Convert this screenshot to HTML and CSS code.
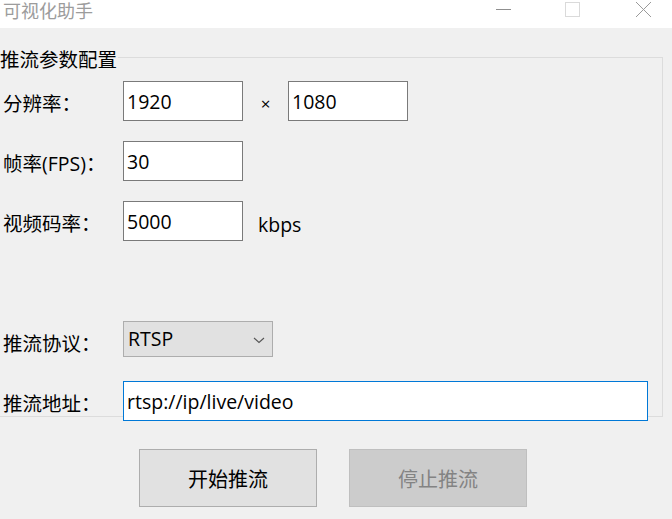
FILE: index.html
```html
<!DOCTYPE html>
<html lang="zh-CN">
<head>
<meta charset="utf-8">
<title>可视化助手</title>
<link rel="stylesheet" href="styles.css">
</head>
<body>
<div class="window">
  <header class="titlebar">
    <span class="title">可视化助手</span>
    <div class="caption-buttons">
      <span class="cap-btn">
        <svg width="69" height="28" viewBox="0 0 69 28"><line x1="27" y1="9.5" x2="42" y2="9.5" stroke="#8f8f8f" stroke-width="1"/></svg>
      </span>
      <span class="cap-btn">
        <svg width="69" height="28" viewBox="0 0 69 28"><rect x="27.5" y="2.5" width="14" height="14" fill="none" stroke="#dadada" stroke-width="1"/></svg>
      </span>
      <span class="cap-btn cap-close">
        <svg width="65" height="28" viewBox="0 0 65 28"><path d="M29 2 L44 17 M44 2 L29 17" stroke="#9a9a9a" stroke-width="1" fill="none"/></svg>
      </span>
    </div>
  </header>

  <main class="content">
    <section class="group">
      <div class="group-title">推流参数配置</div>
      <div class="rows">
        <div class="row">
          <label class="label">分辨率：</label>
          <input class="field" type="text" value="1920">
          <span class="times">×</span>
          <input class="field" type="text" value="1080">
        </div>
        <div class="row">
          <label class="label">帧率(FPS)：</label>
          <input class="field" type="text" value="30">
        </div>
        <div class="row">
          <label class="label">视频码率：</label>
          <input class="field" type="text" value="5000">
          <span class="unit">kbps</span>
        </div>
        <div class="row"></div>
        <div class="row">
          <label class="label">推流协议：</label>
          <div class="combo">
            <span class="combo-text">RTSP</span>
            <svg class="chevron" width="12" height="7" viewBox="0 0 12 7"><path d="M1 1 L6 5.5 L11 1" fill="none" stroke="#555" stroke-width="1.1"/></svg>
          </div>
        </div>
        <div class="row">
          <label class="label">推流地址：</label>
          <input class="field field-wide" type="text" value="rtsp://ip/live/video">
        </div>
      </div>
    </section>

    <div class="actions">
      <button class="btn" type="button">开始推流</button>
      <button class="btn btn-disabled" type="button" disabled>停止推流</button>
    </div>
  </main>
</div>
</body>
</html>
```
FILE: styles.css
```css
html, body {
  margin: 0;
  padding: 0;
}

body {
  width: 672px;
  height: 519px;
  overflow: hidden;
  background: #f0f0f0;
  font-family: "Open Sans", "Noto Sans CJK SC", sans-serif;
  font-size: 19.5px;
  color: #000;
}

.window {
  display: flex;
  flex-direction: column;
}

.titlebar {
  height: 28px;
  background: #ffffff;
  display: flex;
  align-items: flex-start;
}

.title {
  padding-left: 3px;
  font-size: 18px;
  line-height: 20px;
  color: #9c9c9c;
  font-family: "Noto Sans CJK SC", sans-serif;
}

.caption-buttons {
  margin-left: auto;
  display: flex;
  width: 203px;
}

.cap-btn {
  display: block;
  width: 69px;
  height: 28px;
}

.cap-btn svg {
  display: block;
}

.cap-close {
  width: 65px;
}

.content {
  display: flex;
  flex-direction: column;
}

.group {
  box-sizing: border-box;
  width: 663px;
  height: 360px;
  margin-top: 29px;
  border: 1px solid #dcdcdc;
  border-left: none;
  display: flex;
  flex-direction: column;
}

.group-title {
  align-self: flex-start;
  margin-top: -8px;
  line-height: 20px;
  padding-right: 1px;
  background: #f0f0f0;
}

.rows {
  margin-top: 11px;
  display: flex;
  flex-direction: column;
  gap: 20px;
}

.row {
  height: 40px;
  display: flex;
  align-items: flex-start;
}

.label {
  box-sizing: border-box;
  width: 123px;
  padding-left: 3px;
  margin-top: 13px;
  line-height: 20px;
  white-space: nowrap;
}

.field {
  box-sizing: border-box;
  width: 120px;
  height: 40px;
  margin: 0;
  padding: 0 3px;
  border: 1px solid #7a7a7a;
  border-radius: 0;
  background: #ffffff;
  font: inherit;
  color: #000;
  outline: none;
}

.field-wide {
  width: 525px;
  border-color: #0078d7;
}

.times {
  width: 45px;
  text-align: center;
  font-size: 17px;
  line-height: 20px;
  margin-top: 13px;
}

.unit {
  margin-left: 15px;
  margin-top: 12px;
  line-height: 24px;
}

.combo {
  box-sizing: border-box;
  width: 150px;
  height: 36px;
  border: 1px solid #adadad;
  background: #e1e1e1;
  display: flex;
  align-items: center;
  justify-content: space-between;
  padding: 0 7px 0 4px;
}

.combo-text {
  line-height: 20px;
}

.chevron {
  display: block;
  margin-top: 2px;
}

.actions {
  display: flex;
  gap: 32px;
  padding-left: 139px;
  margin-top: 32px;
}

.btn {
  box-sizing: border-box;
  width: 178px;
  height: 58px;
  margin: 0;
  padding: 0;
  border: 1px solid #adadad;
  border-radius: 0;
  background: #e1e1e1;
  font: inherit;
  font-size: 20px;
  color: #000;
}

.btn-disabled {
  background: #cccccc;
  border-color: #bfbfbf;
  color: #838383;
}
```
